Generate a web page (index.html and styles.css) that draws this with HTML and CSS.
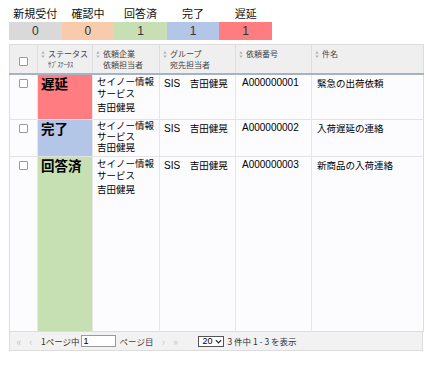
FILE: index.html
```html
<!DOCTYPE html>
<html lang="ja">
<head>
<meta charset="utf-8">
<link rel="stylesheet" href="styles.css">
</head>
<body>
<div class="page">
  <div class="summary">
    <div class="sum-label">新規受付</div>
    <div class="sum-label">確認中</div>
    <div class="sum-label">回答済</div>
    <div class="sum-label">完了</div>
    <div class="sum-label">遅延</div>
    <div class="sum-box c-new">0</div>
    <div class="sum-box c-check">0</div>
    <div class="sum-box c-answered">1</div>
    <div class="sum-box c-done">1</div>
    <div class="sum-box c-late">1</div>
  </div>

  <div class="grid">
    <table class="tbl">
      <colgroup>
        <col class="w-cb"><col class="w-st"><col class="w-co"><col class="w-gr"><col class="w-no"><col class="w-sub">
      </colgroup>
      <thead>
        <tr class="hrow">
          <th class="th-cb"><span class="cb"></span></th>
          <th><div class="hd"><svg class="sort" viewBox="0 0 4 8"><path d="M2 0L4 3H0Z M0 5H4L2 8Z" fill="#b5b5b5"/></svg><div class="hd-t"><div>ステータス</div><div class="sub">ｻﾌﾞｽﾃｰﾀｽ</div></div></div></th>
          <th><div class="hd"><svg class="sort" viewBox="0 0 4 8"><path d="M2 0L4 3H0Z M0 5H4L2 8Z" fill="#b5b5b5"/></svg><div class="hd-t"><div>依頼企業</div><div>依頼担当者</div></div></div></th>
          <th><div class="hd"><svg class="sort" viewBox="0 0 4 8"><path d="M2 0L4 3H0Z M0 5H4L2 8Z" fill="#b5b5b5"/></svg><div class="hd-t"><div>グループ</div><div>宛先担当者</div></div></div></th>
          <th><div class="hd"><svg class="sort" viewBox="0 0 4 8"><path d="M2 0L4 3H0Z M0 5H4L2 8Z" fill="#b5b5b5"/></svg><div class="hd-t"><div>依頼番号</div></div></div></th>
          <th><div class="hd"><svg class="sort" viewBox="0 0 4 8"><path d="M2 0L4 3H0Z M0 5H4L2 8Z" fill="#b5b5b5"/></svg><div class="hd-t"><div>件名</div></div></div></th>
        </tr>
      </thead>
      <tbody>
        <tr class="r1">
          <td class="td-cb"><span class="cb"></span></td>
          <td class="st c-late">遅延</td>
          <td class="co"><div>セイノー情報</div><div>サービス</div><div class="person">吉田健晃</div></td>
          <td class="gr"><span class="lat">SIS</span>　吉田健晃</td>
          <td class="no">A000000001</td>
          <td class="sub-c">緊急の出荷依頼</td>
        </tr>
        <tr class="r2">
          <td class="td-cb"><span class="cb"></span></td>
          <td class="st c-done">完了</td>
          <td class="co tight"><div>セイノー情報</div><div>サービス</div><div>吉田健晃</div></td>
          <td class="gr"><span class="lat">SIS</span>　吉田健晃</td>
          <td class="no">A000000002</td>
          <td class="sub-c">入荷遅延の連絡</td>
        </tr>
        <tr class="r3">
          <td class="td-cb"><span class="cb"></span></td>
          <td class="st c-answered">回答済</td>
          <td class="co"><div>セイノー情報</div><div>サービス</div><div class="person">吉田健晃</div></td>
          <td class="gr"><span class="lat">SIS</span>　吉田健晃</td>
          <td class="no">A000000003</td>
          <td class="sub-c">新商品の入荷連絡</td>
        </tr>
      </tbody>
    </table>
    <div class="pager">
      <span class="pg-ic">«</span>
      <span class="pg-ic">‹</span>
      <span class="pg-t1">1ページ中</span>
      <span class="pg-input">1</span>
      <span class="pg-t2">ページ目</span>
      <span class="pg-ic">›</span>
      <span class="pg-ic">»</span>
      <span class="pg-sel">20<svg viewBox="0 0 8 5" class="chev"><path d="M1 1L4 4L7 1" stroke="#222" stroke-width="1.4" fill="none"/></svg></span>
      <span class="pg-t3">3 件中 1 - 3 を表示</span>
    </div>
  </div>
</div>
</body>
</html>
```

FILE: styles.css
```css
html, body {
  margin: 0;
  padding: 0;
  background: #ffffff;
}
body {
  font-family: "Noto Sans CJK JP", "Noto Sans", sans-serif;
  color: #000;
}
.page {
  padding: 5px 0 0 9px;
  width: 414px;
}
.summary {
  display: grid;
  grid-template-columns: repeat(5, 52.6px);
  grid-template-rows: 17px 18px;
}
.sum-label {
  font-size: 11px;
  line-height: 16px;
  text-align: center;
  color: #111;
}
.sum-box {
  font-family: "Liberation Sans", sans-serif;
  font-size: 12px;
  line-height: 18px;
  text-align: center;
  color: #333;
}
.c-new { background: #d9d9d9; }
.c-check { background: #f8cbad; }
.c-answered { background: #c6e0b4; }
.c-done { background: #b4c6e7; }
.c-late { background: #ff7c80; }

.grid {
  margin-top: 4px;
  width: 414px;
}
.tbl {
  width: 414px;
  table-layout: fixed;
  border-collapse: collapse;
  border: 1px solid #dcdcdc;
}
.w-cb { width: 28px; }
.w-st { width: 55px; }
.w-co { width: 67px; }
.w-gr { width: 76px; }
.w-no { width: 76px; }
.w-sub { width: 112px; }

.hrow { height: 29px; }
thead th {
  background: #efefef;
  padding: 0;
  border-left: 1px solid #dedede;
  border-bottom: 2px solid #a7b3c4;
  vertical-align: top;
  text-align: left;
  font-weight: normal;
}
thead th:first-child { border-left: none; }
.th-cb { text-align: center; vertical-align: middle; }
.hd {
  display: flex;
  gap: 3px;
  padding: 3px 0 0 3px;
}
.sort {
  width: 4px;
  height: 7px;
  margin-top: 3px;
  flex: none;
}
.hd-t {
  font-size: 8px;
  line-height: 11px;
  color: #444;
  white-space: nowrap;
}
.hd-t .sub {
  font-size: 7px;
  transform: scaleX(0.9);
  transform-origin: left;
}

.cb {
  display: inline-block;
  width: 7px;
  height: 7px;
  border: 1px solid #9a9a9a;
  border-radius: 1px;
  background: #fff;
}
.r1 { height: 46px; }
.r2 { height: 37px; }
.r3 { height: 175px; }
tbody td {
  background: #fcfcfe;
  border-left: 1px solid #e6e6e6;
  border-top: 1px solid #e3e3e3;
  vertical-align: top;
  padding: 0;
  font-size: 9.5px;
  line-height: 12px;
}
tbody tr:first-child td { border-top: none; }
tbody td:first-child { border-left: none; }
.td-cb { text-align: center; padding-top: 3px; }
.st {
  font-size: 13.5px;
  font-weight: bold;
  line-height: 16px;
  padding: 0 0 0 3px;
}
tbody td.st.c-late { background: #ff7c80; }
tbody td.st.c-done { background: #b4c6e7; }
tbody td.st.c-answered { background: #c6e0b4; }
.co { padding: 0 0 0 4px; }
.co div { white-space: nowrap; }
.co .person { margin-top: 2px; }
.co.tight { line-height: 11px; }
.gr { padding: 2px 0 0 4px; white-space: nowrap; }
.lat { font-family: "Liberation Sans", sans-serif; font-size: 10px; }
.no { padding: 2px 0 0 6px; font-family: "Liberation Sans", sans-serif; font-size: 10px; }
.sub-c { padding: 2px 0 0 5px; white-space: nowrap; }

.pager {
  display: flex;
  align-items: center;
  height: 18px;
  background: #f2f2f2;
  border: 1px solid #dcdcdc;
  border-top: none;
  font-size: 8.5px;
  color: #333;
  padding-left: 3px;
}
.pg-ic {
  color: #c8c8c8;
  font-size: 11px;
  width: 12px;
  text-align: center;
}
.pg-t1 { margin-left: 4px; }
.pg-input {
  display: inline-block;
  width: 31px;
  height: 10px;
  line-height: 10px;
  border: 1px solid #9a9a9a;
  background: #fff;
  margin: 0 4px 0 1px;
  padding-left: 2px;
  font-family: "Liberation Sans", sans-serif;
  font-size: 9px;
  color: #000;
}
.pg-t2 { margin-right: 4px; color: #444; }
.pg-sel {
  display: inline-flex;
  align-items: center;
  gap: 3px;
  margin-left: 17px;
  width: 21px;
  height: 9px;
  border: 1px solid #555;
  background: #fff;
  padding-left: 3px;
  font-family: "Liberation Sans", sans-serif;
  font-size: 9px;
  color: #000;
}
.chev { width: 7px; height: 5px; }
.pg-t3 { margin-left: 3px; }
```
